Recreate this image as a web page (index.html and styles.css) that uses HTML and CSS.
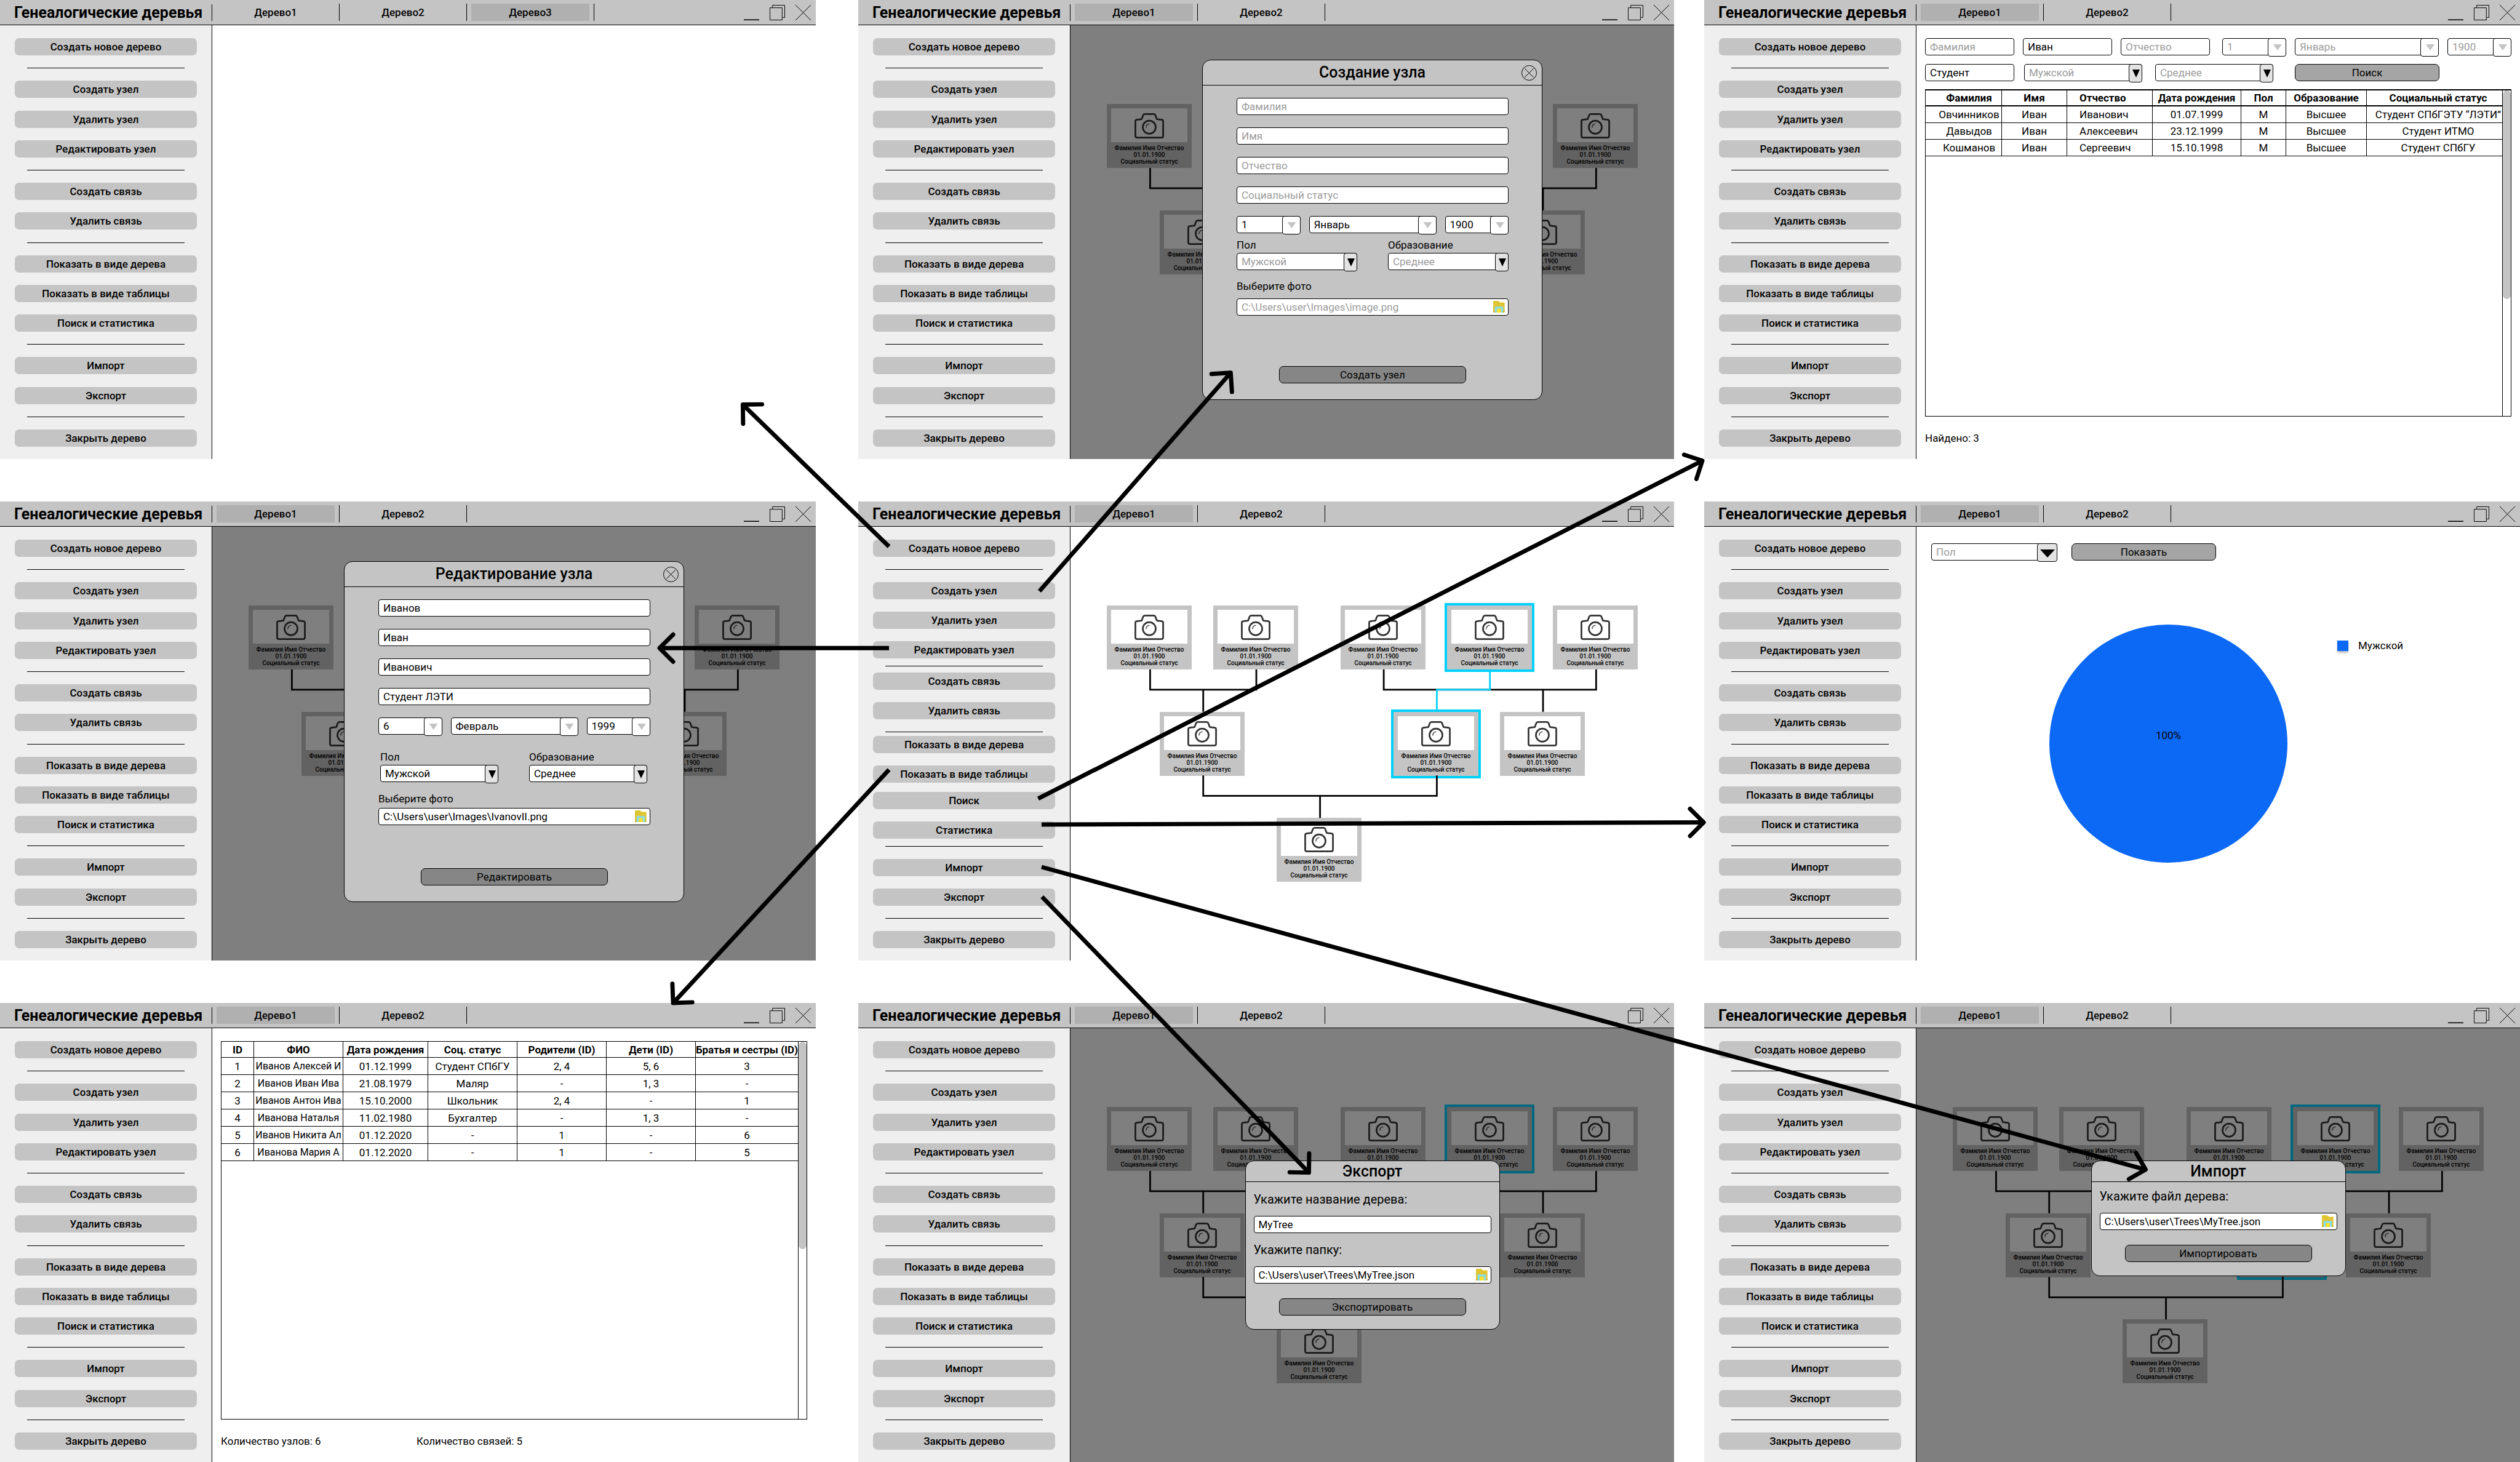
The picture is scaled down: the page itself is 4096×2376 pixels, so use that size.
FILE: index.html
```html
<!DOCTYPE html>
<html lang="ru">
<head>
<meta charset="utf-8">
<title>Генеалогические деревья</title>
<link rel="stylesheet" href="styles.css">
</head>
<body>

<svg class="sprite" aria-hidden="true">
  <symbol id="i-min" viewBox="0 0 36 36"><path d="M0 35H36" stroke="#000" stroke-width="2.5"/></symbol>
  <symbol id="i-restore" viewBox="0 0 36 36"><path d="M6.7 6V.7H35.3V29.3H30.5M.7 6.7H29.3V35.3H.7Z" fill="none" stroke="#000" stroke-width="1.4"/></symbol>
  <symbol id="i-close" viewBox="0 0 36 36"><path d="M0 0L36 36M36 0L0 36" stroke="#000" stroke-width="1.4"/></symbol>
  <symbol id="i-round" viewBox="0 0 36 36"><circle cx="18" cy="18" r="17.3" fill="none" stroke="#000" stroke-width="1.4"/><path d="M7.5 7.5L28.5 28.5M28.5 7.5L7.5 28.5" stroke="#000" stroke-width="1.4"/></symbol>
  <symbol id="i-camera" viewBox="0 0 70 60"><g fill="none" stroke="#333" stroke-width="4" stroke-linejoin="round"><path d="M6 58Q2 58 2 54V19Q2 16 5 15.6L17 14L20.6 4.5Q21.6 2 24.5 2H46Q48.5 2 49.4 4.5L53 14L65 15.6Q68 16 68 19V54Q68 58 64 58Z"/><circle cx="35" cy="33.3" r="15.4"/><path d="M27.3 34.5Q27.6 26 35.6 25.2" stroke-width="1.8"/></g></symbol>
  <symbol id="i-folder" viewBox="0 0 27 27">
    <path d="M2 0H12L14 2H24Q26.5 2 26.5 4V25Q26 27 24 27H2Q0 27 0 25V2Q0 0 2 0Z" fill="#dfc433"/>
    <path d="M0 24H27V25Q26.5 27 24 27H2Q0 27 0 25Z" fill="#c9a41c"/>
    <path d="M14 1.5H25V4H16Z" fill="#fff8c8"/>
    <path d="M4 13H23V27H18V18H9V27H4Z" fill="#84dfee"/>
    <path d="M9 18H18V27H9Z" fill="#fbe02c"/>
  </symbol>
</svg>

<template id="titlebar">
  <h2 class="app-title">Генеалогические деревья</h2>
  <ul class="tabs">
    <li><a class="tab active" href="#">Дерево1</a></li>
    <li><a class="tab" href="#">Дерево2</a></li>
  </ul>
  <div class="controls">
    <button type="button" aria-label="Свернуть"><svg><use href="#i-min"/></svg></button>
    <button type="button" aria-label="Развернуть"><svg><use href="#i-restore"/></svg></button>
    <button type="button" aria-label="Закрыть"><svg><use href="#i-close"/></svg></button>
  </div>
</template>

<template id="sidebar">
  <button type="button">Создать новое дерево</button>
  <hr>
  <button type="button">Создать узел</button>
  <button type="button">Удалить узел</button>
  <button type="button">Редактировать узел</button>
  <hr>
  <button type="button">Создать связь</button>
  <button type="button">Удалить связь</button>
  <hr>
  <button type="button">Показать в виде дерева</button>
  <button type="button">Показать в виде таблицы</button>
  <button type="button">Поиск и статистика</button>
  <hr>
  <button type="button">Импорт</button>
  <button type="button">Экспорт</button>
  <hr>
  <button type="button">Закрыть дерево</button>
</template>

<template id="person">
  <div class="photo"><svg><use href="#i-camera"/></svg></div>
  <p>Фамилия Имя Отчество</p>
  <p>01.01.1900</p>
  <p>Социальный статус</p>
</template>

<template id="tree">
  <div class="tree">
    <svg class="links" viewBox="0 0 1250 650">
      <path d="M102 150V198H352V150M227 198V250M652 150V198H1152V150M1027 198V250"/>
      <path class="picked" d="M902 150V198H777V250"/>
    </svg>
    <div class="person n1"></div>
    <div class="person n2"></div>
    <div class="person n3"></div>
    <div class="person n4 picked"></div>
    <div class="person n5"></div>
    <div class="person n6"></div>
    <div class="person n7 picked"></div>
    <div class="person n8"></div>
    <div class="person n9"></div>
    <svg class="links" viewBox="0 0 1250 650">
      <path d="M227 400V448H777V400M502 448V500"/>
    </svg>
  </div>
</template>

<main class="board">

  <section class="window">
    <header class="titlebar">
      <h2 class="app-title">Генеалогические деревья</h2>
      <ul class="tabs">
        <li><a class="tab" href="#">Дерево1</a></li>
        <li><a class="tab" href="#">Дерево2</a></li>
        <li><a class="tab active" href="#">Дерево3</a></li>
      </ul>
      <div class="controls">
        <button type="button" aria-label="Свернуть"><svg><use href="#i-min"/></svg></button>
        <button type="button" aria-label="Развернуть"><svg><use href="#i-restore"/></svg></button>
        <button type="button" aria-label="Закрыть"><svg><use href="#i-close"/></svg></button>
      </div>
    </header>
    <nav class="sidebar" data-template="sidebar"></nav>
    <div class="content"></div>
  </section>

  <section class="window">
    <header class="titlebar" data-template="titlebar"></header>
    <nav class="sidebar" data-template="sidebar"></nav>
    <div class="content canvas">
      <div class="slot" data-template="tree"></div>
      <div class="overlay">
        <form class="dialog">
          <header class="dialog-head"><h3>Создание узла</h3><button class="round" type="button" aria-label="Закрыть"><svg><use href="#i-round"/></svg></button></header>
          <div class="dialog-body">
            <div class="fields">
              <input type="text" placeholder="Фамилия" aria-label="Фамилия">
              <input type="text" placeholder="Имя" aria-label="Имя">
              <input type="text" placeholder="Отчество" aria-label="Отчество">
              <input type="text" placeholder="Социальный статус" aria-label="Социальный статус">
              <div class="date">
                <span class="select day"><select aria-label="День"><option>1</option></select></span>
                <span class="select month"><select aria-label="Месяц"><option>Январь</option></select></span>
                <span class="select year"><select aria-label="Год"><option>1900</option></select></span>
              </div>
            </div>
            <div class="pair">
              <div class="labelled"><label for="c-sex">Пол</label><span class="select strong"><select id="c-sex" class="empty"><option>Мужской</option></select></span></div>
              <div class="labelled"><label for="c-edu">Образование</label><span class="select strong"><select id="c-edu" class="empty"><option>Среднее</option></select></span></div>
            </div>
            <div class="labelled file-group">
              <label for="c-photo">Выберите фото</label>
              <span class="file"><input id="c-photo" type="text" placeholder="C:\Users\user\Images\image.png"><button type="button" aria-label="Обзор"><svg><use href="#i-folder"/></svg></button></span>
            </div>
            <button class="submit" type="button">Создать узел</button>
          </div>
        </form>
      </div>
    </div>
  </section>

  <section class="window">
    <header class="titlebar" data-template="titlebar"></header>
    <nav class="sidebar" data-template="sidebar"></nav>
    <div class="content page search">
      <form class="filters">
        <div class="filter-row">
          <input class="w-name" type="text" placeholder="Фамилия" aria-label="Фамилия">
          <input class="w-name" type="text" value="Иван" aria-label="Имя">
          <input class="w-name" type="text" placeholder="Отчество" aria-label="Отчество">
          <span class="select w-day"><select class="empty" aria-label="День"><option>1</option></select></span>
          <span class="select w-month"><select class="empty" aria-label="Месяц"><option>Январь</option></select></span>
          <span class="select w-day"><select class="empty" aria-label="Год"><option>1900</option></select></span>
        </div>
        <div class="filter-row second">
          <input class="w-name" type="text" value="Студент" aria-label="Социальный статус">
          <span class="select strong"><select class="empty" aria-label="Пол"><option>Мужской</option></select></span>
          <span class="select strong"><select class="empty" aria-label="Образование"><option>Среднее</option></select></span>
          <button class="action" type="button">Поиск</button>
        </div>
      </form>
      <div class="table-box">
        <table class="found">
          <colgroup><col class="f1"><col class="f2"><col class="f3"><col class="f4"><col class="f5"><col class="f6"><col class="f7"></colgroup>
          <thead><tr><th>Фамилия</th><th>Имя</th><th>Отчество</th><th>Дата рождения</th><th>Пол</th><th>Образование</th><th>Социальный статус</th></tr></thead>
          <tbody>
            <tr><td>Овчинников</td><td>Иван</td><td>Иванович</td><td>01.07.1999</td><td>М</td><td>Высшее</td><td>Студент СПбГЭТУ “ЛЭТИ”</td></tr>
            <tr><td>Давыдов</td><td>Иван</td><td>Алексеевич</td><td>23.12.1999</td><td>М</td><td>Высшее</td><td>Студент ИТМО</td></tr>
            <tr><td>Кошманов</td><td>Иван</td><td>Сергеевич</td><td>15.10.1998</td><td>М</td><td>Высшее</td><td>Студент СПбГУ</td></tr>
          </tbody>
        </table>
        <div class="scroll"><div class="thumb long"></div></div>
      </div>
      <footer class="totals"><span>Найдено: 3</span></footer>
    </div>
  </section>

  <section class="window">
    <header class="titlebar" data-template="titlebar"></header>
    <nav class="sidebar" data-template="sidebar"></nav>
    <div class="content canvas">
      <div class="slot" data-template="tree"></div>
      <div class="overlay">
        <form class="dialog edit">
          <header class="dialog-head"><h3>Редактирование узла</h3><button class="round" type="button" aria-label="Закрыть"><svg><use href="#i-round"/></svg></button></header>
          <div class="dialog-body">
            <div class="fields">
              <input type="text" value="Иванов" aria-label="Фамилия">
              <input type="text" value="Иван" aria-label="Имя">
              <input type="text" value="Иванович" aria-label="Отчество">
              <input type="text" value="Студент ЛЭТИ" aria-label="Социальный статус">
              <div class="date">
                <span class="select day"><select aria-label="День"><option>6</option></select></span>
                <span class="select month"><select aria-label="Месяц"><option>Февраль</option></select></span>
                <span class="select year"><select aria-label="Год"><option>1999</option></select></span>
              </div>
            </div>
            <div class="pair">
              <div class="labelled"><label for="e-sex">Пол</label><span class="select strong"><select id="e-sex"><option>Мужской</option></select></span></div>
              <div class="labelled"><label for="e-edu">Образование</label><span class="select strong"><select id="e-edu"><option>Среднее</option></select></span></div>
            </div>
            <div class="labelled file-group">
              <label for="e-photo">Выберите фото</label>
              <span class="file"><input id="e-photo" type="text" value="C:\Users\user\Images\IvanovII.png"><button type="button" aria-label="Обзор"><svg><use href="#i-folder"/></svg></button></span>
            </div>
            <button class="submit" type="button">Редактировать</button>
          </div>
        </form>
      </div>
    </div>
  </section>

  <section class="window">
    <header class="titlebar" data-template="titlebar"></header>
    <nav class="sidebar">
      <button type="button">Создать новое дерево</button>
      <hr>
      <button type="button">Создать узел</button>
      <button type="button">Удалить узел</button>
      <button type="button">Редактировать узел</button>
      <hr class="tight-both">
      <button type="button">Создать связь</button>
      <button type="button">Удалить связь</button>
      <hr class="tight-below">
      <button type="button">Показать в виде дерева</button>
      <button type="button">Показать в виде таблицы</button>
      <button class="raised" type="button">Поиск</button>
      <button type="button">Статистика</button>
      <hr class="tight-above">
      <button type="button">Импорт</button>
      <button type="button">Экспорт</button>
      <hr>
      <button type="button">Закрыть дерево</button>
    </nav>
    <div class="content canvas">
      <div class="slot" data-template="tree"></div>
    </div>
  </section>

  <section class="window">
    <header class="titlebar" data-template="titlebar"></header>
    <nav class="sidebar" data-template="sidebar"></nav>
    <div class="content stats">
      <form class="stats-form">
        <span class="select strong wide"><select class="empty" aria-label="Показатель"><option>Пол</option></select></span>
        <button class="action" type="button">Показать</button>
      </form>
      <div class="chart">
        <div class="pie">100%</div>
        <div class="legend"><i></i>Мужской</div>
      </div>
    </div>
  </section>

  <section class="window">
    <header class="titlebar" data-template="titlebar"></header>
    <nav class="sidebar" data-template="sidebar"></nav>
    <div class="content page">
      <div class="table-box">
        <table class="people">
          <colgroup><col class="p1"><col class="p2"><col class="p3"><col class="p2"><col class="p2"><col class="p2"><col class="p7"></colgroup>
          <thead><tr><th>ID</th><th>ФИО</th><th>Дата рождения</th><th>Соц. статус</th><th>Родители (ID)</th><th>Дети (ID)</th><th>Братья и сестры (ID)</th></tr></thead>
          <tbody>
            <tr><td>1</td><td>Иванов Алексей И</td><td>01.12.1999</td><td>Студент СПбГУ</td><td>2, 4</td><td>5, 6</td><td>3</td></tr>
            <tr><td>2</td><td>Иванов Иван Ива</td><td>21.08.1979</td><td>Маляр</td><td>-</td><td>1, 3</td><td>-</td></tr>
            <tr><td>3</td><td>Иванов Антон Ива</td><td>15.10.2000</td><td>Школьник</td><td>2, 4</td><td>-</td><td>1</td></tr>
            <tr><td>4</td><td>Иванова Наталья</td><td>11.02.1980</td><td>Бухгалтер</td><td>-</td><td>1, 3</td><td>-</td></tr>
            <tr><td>5</td><td>Иванов Никита Ал</td><td>01.12.2020</td><td>-</td><td>1</td><td>-</td><td>6</td></tr>
            <tr><td>6</td><td>Иванова Мария А</td><td>01.12.2020</td><td>-</td><td>1</td><td>-</td><td>5</td></tr>
          </tbody>
        </table>
        <div class="scroll"><div class="thumb"></div></div>
      </div>
      <footer class="totals"><span>Количество узлов: 6</span><span>Количество связей: 5</span></footer>
    </div>
  </section>

  <section class="window">
    <header class="titlebar" data-template="titlebar"></header>
    <nav class="sidebar" data-template="sidebar"></nav>
    <div class="content canvas">
      <div class="slot" data-template="tree"></div>
      <div class="overlay low">
        <form class="dialog small">
          <header class="dialog-head"><h3>Экспорт</h3></header>
          <div class="dialog-body">
            <label for="x-name">Укажите название дерева:</label>
            <input id="x-name" type="text" value="MyTree">
            <label for="x-dir">Укажите папку:</label>
            <span class="file"><input id="x-dir" type="text" value="C:\Users\user\Trees\MyTree.json"><button type="button" aria-label="Обзор"><svg><use href="#i-folder"/></svg></button></span>
            <button class="submit" type="button">Экспортировать</button>
          </div>
        </form>
      </div>
    </div>
  </section>

  <section class="window">
    <header class="titlebar" data-template="titlebar"></header>
    <nav class="sidebar" data-template="sidebar"></nav>
    <div class="content canvas">
      <div class="slot" data-template="tree"></div>
      <div class="overlay low">
        <form class="dialog small import">
          <header class="dialog-head"><h3>Импорт</h3></header>
          <div class="dialog-body">
            <label for="i-file">Укажите файл дерева:</label>
            <span class="file"><input id="i-file" type="text" value="C:\Users\user\Trees\MyTree.json"><button type="button" aria-label="Обзор"><svg><use href="#i-folder"/></svg></button></span>
            <button class="submit" type="button">Импортировать</button>
          </div>
        </form>
      </div>
    </div>
  </section>

  <svg class="arrows" viewBox="0 0 5930 3440" preserveAspectRatio="none" aria-hidden="true">
    <defs>
      <marker id="head" viewBox="-45 -45 60 90" refX="0" refY="0" markerWidth="60" markerHeight="90" markerUnits="userSpaceOnUse" orient="auto">
        <path d="M-32 -32L0 0L-32 32" fill="none" stroke="#000" stroke-width="11" stroke-linecap="round" stroke-linejoin="round"/>
      </marker>
    </defs>
    <path d="M2092 1286L1748 952"/>
    <path d="M2446 1391L2896 877"/>
    <path d="M2092 1525H1552"/>
    <path d="M2092 1811L1584 2360"/>
    <path d="M2443 1879L4006 1084"/>
    <path d="M2451 1940L4009 1935"/>
    <path d="M2451 2040L5049 2752"/>
    <path d="M2452 2110L3080 2759"/>
  </svg>
</main>

<script src="script.js"></script>
</body>
</html>
```

FILE: script.js
```js
// Fill every placeholder with the shared part it names.
const part = (id) => document.getElementById(id).content.cloneNode(true);

document.querySelectorAll('[data-template]').forEach((slot) => {
  slot.append(part(slot.dataset.template));
});

document.querySelectorAll('.person').forEach((card) => {
  card.append(part('person'));
});
```

FILE: styles.css
```css
* {
  box-sizing: border-box;
}

body {
  margin: 0;
  background: #fff;
  color: #000;
  font-family: Roboto, "Liberation Sans", sans-serif;
  font-size: 17px;
  line-height: 20px;
}

h2, h3, p, ul {
  margin: 0;
  padding: 0;
}

button, input, select {
  font: inherit;
  color: inherit;
  margin: 0;
}

button {
  border: 0;
  padding: 0;
  background: none;
}

a {
  color: inherit;
  text-decoration: none;
}

svg {
  display: block;
}

.sprite {
  position: absolute;
  width: 0;
  height: 0;
}

/* Board of windows */
.board {
  position: relative;
  display: grid;
  grid-template-columns: 1326fr 69fr 1326fr 49fr 1326fr;
  grid-auto-rows: 1fr;
  row-gap: 69px;
  min-height: 100vh;
}

.window {
  display: grid;
  grid-template-columns: 345px 1fr;
  grid-template-rows: 41px 1fr;
  min-width: 0;
}

.window:nth-of-type(3n+1) { grid-column: 1; }
.window:nth-of-type(3n+2) { grid-column: 3; }
.window:nth-of-type(3n) { grid-column: 5; }

/* Title bar */
.titlebar {
  grid-column: 1 / -1;
  display: flex;
  align-items: center;
  background: #c4c4c4;
  border-bottom: 1px solid #000;
}

.app-title {
  width: 345px;
  padding-left: 23px;
  border-right: 1px solid #000;
  font-size: 25px;
  line-height: 27px;
  font-weight: 700;
  white-space: nowrap;
}

.tabs {
  display: flex;
  list-style: none;
}

.tabs li {
  width: 207px;
  padding: 0 7px;
  border-right: 1px solid #000;
}

.tab {
  display: block;
  line-height: 28px;
  font-weight: 500;
  text-align: center;
}

.tab.active {
  background: #b0b0b0;
}

.controls {
  display: flex;
  gap: 17px;
  margin-left: auto;
  padding-right: 8px;
}

.controls svg,
.round svg {
  width: 25px;
  height: 25px;
}

/* Side menu */
.sidebar {
  display: flex;
  flex-direction: column;
  justify-content: space-between;
  gap: 20px;
  padding: 21px 24px 20px;
  background: #efefef;
  border-right: 1px solid #000;
}

.sidebar button {
  height: 28px;
  border-radius: 7px;
  background: #c4c4c4;
  font-weight: 500;
}

.sidebar hr {
  align-self: stretch;
  height: 1px;
  margin: 0 20px;
  border: 0;
  background: #000;
}

.sidebar .tight-both { margin-top: -8px; margin-bottom: -10px; }
.sidebar .tight-below { margin-bottom: -14px; }
.sidebar .tight-above { margin-top: -8px; }
.sidebar .raised { margin-top: -6px; }

/* Content areas */
.content {
  position: relative;
  min-width: 0;
}

.canvas {
  display: flex;
  align-items: center;
  justify-content: center;
}

/* Family tree */
.tree {
  position: relative;
  width: 863px;
  height: 449px;
}

.links {
  position: absolute;
  left: 0;
  top: 0;
  width: 863px;
  height: 449px;
}

.links path {
  fill: none;
  stroke: #000;
  stroke-width: 4;
}

.links .picked {
  stroke: #00d1ff;
}

.person {
  position: absolute;
  width: 138px;
  height: 104px;
  padding: 7px;
  background: #c4c4c4;
  font-size: 10px;
  line-height: 11px;
  font-weight: 500;
  text-align: center;
  white-space: nowrap;
}

.person.picked {
  outline: 4px solid #00d1ff;
}

.photo {
  display: flex;
  align-items: center;
  justify-content: center;
  height: 55px;
  margin-bottom: 4px;
  padding-top: 2px;
  background: #fff;
}

.photo svg {
  width: 48px;
  height: 41px;
}

.n1 { left: 0; top: 0; }
.n2 { left: 173px; top: 0; }
.n3 { left: 380px; top: 0; }
.n4 { left: 553px; top: 0; }
.n5 { left: 725px; top: 0; }
.n6 { left: 86px; top: 173px; }
.n7 { left: 466px; top: 173px; }
.n8 { left: 639px; top: 173px; }
.n9 { left: 276px; top: 345px; }

/* Form controls */
input,
select {
  width: 100%;
  height: 28px;
  padding: 0 7px;
  border: 1px solid #000;
  border-radius: 4px;
  background: #fff;
}

select {
  appearance: none;
}

input::placeholder {
  color: #9b9b9b;
  opacity: 1;
}

.empty {
  color: #9b9b9b;
}

.select {
  position: relative;
  display: block;
}

.select::before {
  content: "";
  position: absolute;
  top: 0;
  right: 0;
  width: 28px;
  height: 28px;
  border: 1px solid #000;
  border-radius: 4px;
  background: #fff;
  pointer-events: none;
}

.select::after {
  content: "";
  position: absolute;
  top: 10px;
  right: 7px;
  width: 14px;
  height: 10px;
  background: #c4c4c4;
  clip-path: polygon(0 0, 100% 0, 50% 100%);
  pointer-events: none;
}

.select.strong::before {
  width: 20px;
  background: #e3e3e3;
}

.select.strong::after {
  top: 9px;
  right: 4px;
  width: 12px;
  height: 13px;
  background: #000;
}

.select.wide::before {
  width: 31px;
}

.select.wide::after {
  top: 10px;
  width: 24px;
}

.file {
  position: relative;
  display: block;
}

.file button {
  position: absolute;
  top: 4px;
  right: 6px;
}

.file svg {
  width: 19px;
  height: 19px;
}

.action {
  width: 235px;
  height: 28px;
  border: 1px solid #000;
  border-radius: 7px;
  background: #a5a5a5;
}

/* Dialogs */
.overlay {
  position: absolute;
  inset: 0;
  display: flex;
  align-items: flex-start;
  justify-content: center;
  padding-top: 56px;
  background: rgba(0, 0, 0, 0.5);
}

.overlay.low {
  padding-top: 215px;
}

.dialog {
  width: 553px;
  border: 1px solid #000;
  border-radius: 14px;
  background: #c4c4c4;
}

.dialog-head {
  display: grid;
  grid-template-columns: 1fr auto 1fr;
  align-items: center;
  height: 41px;
  border-bottom: 1px solid #000;
}

.dialog-head h3 {
  grid-column: 2;
  font-size: 25px;
  line-height: 30px;
  font-weight: 500;
}

.round {
  justify-self: end;
  margin-right: 8px;
}

.dialog-body {
  display: flex;
  flex-direction: column;
  padding: 20px 54px 26px 55px;
}

.fields {
  display: flex;
  flex-direction: column;
  gap: 20px;
}

.date {
  display: flex;
  gap: 14px;
}

.day, .year { flex: 1 1 0; }
.month { flex: 2 1 0; }

.pair {
  display: flex;
  justify-content: space-between;
  margin-top: 9px;
}

.labelled {
  display: flex;
  flex-direction: column;
  gap: 3px;
}

.pair .labelled {
  width: 196px;
}

.file-group {
  gap: 10px;
  margin-top: 16px;
}

.submit {
  align-self: center;
  width: 304px;
  height: 28px;
  margin-top: 82px;
  border: 1px solid #000;
  border-radius: 7px;
  background: #868686;
}

.edit .pair {
  margin-top: 26px;
  padding: 0 5px 0 3px;
}

.edit .pair .labelled {
  width: 192px;
}

.edit .file-group {
  gap: 5px;
  margin-top: 17px;
}

.edit .submit {
  margin-top: 70px;
}

.small {
  width: 414px;
}

.small .dialog-head {
  height: 34px;
}

.small .dialog-body {
  gap: 15px;
  padding: 16px 13px 22px;
}

.small.import .dialog-body {
  padding-top: 11px;
}

.small label {
  font-size: 20px;
  line-height: 24px;
}

.small .submit {
  margin-top: 9px;
}

/* Search and table pages */
.page {
  display: flex;
  flex-direction: column;
  padding: 21px 14px 0;
}

.filters {
  display: flex;
  flex-direction: column;
  gap: 14px;
  margin-bottom: 13px;
}

.filter-row {
  display: flex;
  gap: 14px;
}

.w-name { flex: none; width: 145px; }
.w-day { flex: none; width: 104px; }
.w-month { flex: 1; }
.w-name + .w-day { margin-left: 6px; }

.second .select { width: 192px; }
.second .w-name + .select { margin: 0 7px 0 2px; }
.second .action { margin-left: 21px; }

.table-box {
  flex: 1;
  display: flex;
  align-items: stretch;
  border: 1px solid #000;
}

.search .table-box {
  border-top-width: 2px;
}

table {
  flex: 1;
  width: 100%;
  min-width: 0;
  align-self: flex-start;
  table-layout: fixed;
  border-spacing: 0;
}

th, td {
  height: 27px;
  padding: 0;
  border-right: 1px solid #000;
  border-bottom: 1px solid #000;
  text-align: center;
  white-space: nowrap;
}

th {
  font-weight: 700;
}

th:last-child,
td:last-child {
  border-right: 0;
}

.people td { height: 28px; }
.people th { height: 26px; }
.people td:nth-child(2) { font-size: 16px; }

.found th {
  height: 26px;
  border-bottom-width: 2px;
}

.f1 { width: 124px; }
.f2 { width: 106px; }
.f3 { width: 139px; }
.f4 { width: 144px; }
.f5 { width: 73px; }
.f6 { width: 131px; }

.found th:first-child,
.found td:first-child {
  padding-left: 18px;
}

.found th:nth-child(3),
.found td:nth-child(3) {
  padding-left: 20px;
  text-align: left;
}

.found th:last-child,
.found td:last-child {
  padding-left: 12px;
}

.p1 { width: 53px; }
.p2 { width: 145px; }
.p3 { width: 138px; }

.scroll {
  flex: none;
  width: 14px;
  border-left: 1px solid #000;
}

.thumb {
  height: 55%;
  border-radius: 7px;
  background: #c4c4c4;
}

.thumb.long {
  height: 64%;
}

.totals {
  display: flex;
  align-items: center;
  height: 69px;
}

.totals span {
  width: 318px;
}

/* Statistics */
.stats-form {
  display: flex;
  gap: 23px;
  padding: 27px 24px 0;
}

.stats-form .select {
  width: 205px;
}

.chart {
  display: flex;
  align-items: flex-start;
  gap: 81px;
  padding: 104px 0 0 216px;
}

.pie {
  display: flex;
  align-items: center;
  justify-content: center;
  width: 387px;
  height: 387px;
  padding-bottom: 28px;
  border-radius: 50%;
  background: #0c69f5;
}

.legend {
  display: flex;
  align-items: center;
  gap: 16px;
  margin-top: 24px;
}

.legend i {
  width: 18px;
  height: 17px;
  background: #0c69f5;
  box-shadow: 0 3px 3px rgba(0, 0, 0, 0.25);
}

/* Transitions between the windows */
.arrows {
  position: absolute;
  left: 0;
  top: 0;
  width: 100%;
  height: 100%;
  pointer-events: none;
}

.arrows path {
  fill: none;
  stroke: #000;
  stroke-width: 10;
}

.arrows > path {
  marker-end: url(#head);
}
```
